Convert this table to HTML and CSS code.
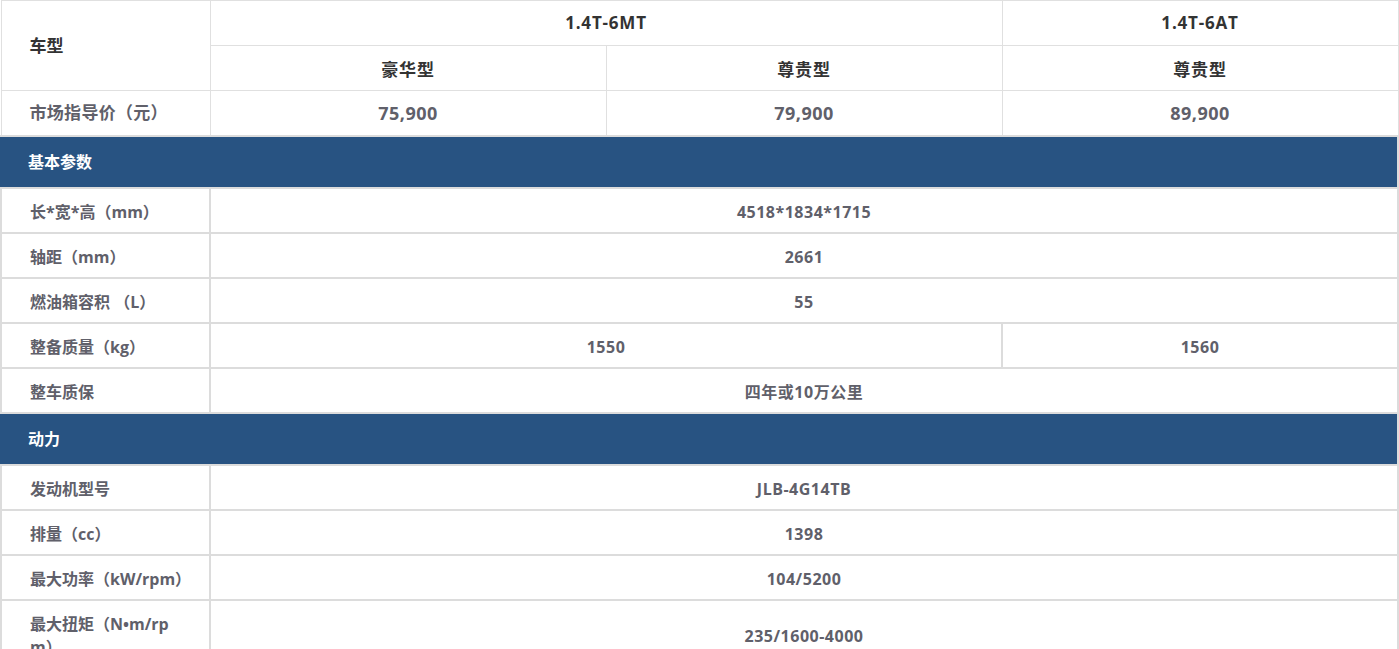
FILE: index.html
```html
<!DOCTYPE html>
<html lang="zh-CN">
<head>
<meta charset="utf-8">
<title>车型参数</title>
<link rel="stylesheet" href="styles.css">
</head>
<body>
<table class="spec">
  <colgroup>
    <col class="c-label">
    <col class="c-val">
    <col class="c-val">
    <col class="c-val">
  </colgroup>
  <thead>
    <tr class="h1">
      <th class="label" rowspan="2">车型</th>
      <th colspan="2">1.4T-6MT</th>
      <th>1.4T-6AT</th>
    </tr>
    <tr class="h2">
      <th>豪华型</th>
      <th>尊贵型</th>
      <th>尊贵型</th>
    </tr>
    <tr class="price">
      <td class="label">市场指导价（元）</td>
      <td>75,900</td>
      <td>79,900</td>
      <td>89,900</td>
    </tr>
  </thead>
  <tbody>
    <tr class="section"><td colspan="4">基本参数</td></tr>
    <tr><td class="label">长*宽*高（mm）</td><td colspan="3">4518*1834*1715</td></tr>
    <tr><td class="label">轴距（mm）</td><td colspan="3">2661</td></tr>
    <tr><td class="label">燃油箱容积 （L）</td><td colspan="3">55</td></tr>
    <tr><td class="label">整备质量（kg）</td><td colspan="2">1550</td><td>1560</td></tr>
    <tr><td class="label">整车质保</td><td colspan="3">四年或10万公里</td></tr>
    <tr class="section"><td colspan="4">动力</td></tr>
    <tr><td class="label">发动机型号</td><td colspan="3">JLB-4G14TB</td></tr>
    <tr><td class="label">排量（cc）</td><td colspan="3">1398</td></tr>
    <tr><td class="label">最大功率（kW/rpm）</td><td colspan="3">104/5200</td></tr>
    <tr><td class="label">最大扭矩（N•m/rpm）</td><td colspan="3">235/1600-4000</td></tr>
  </tbody>
</table>
</body>
</html>
```

FILE: styles.css
```css
html, body {
  margin: 0;
  padding: 0;
  background: #fff;
}

body {
  font-family: "Open Sans", "Noto Sans CJK SC", sans-serif;
  font-weight: 700;
}

.spec {
  width: 1399px;
  border-collapse: collapse;
  table-layout: fixed;
}

.c-label { width: 209px; }
.c-val { width: 396px; }

.spec th,
.spec td {
  border: 1px solid #e0e0e0;
  text-align: center;
  vertical-align: middle;
  padding: 0 30px;
  font-size: 16px;
  letter-spacing: 0.5px;
  color: #60606a;
  line-height: 22px;
}

.spec th {
  color: #333;
  font-size: 17px;
  letter-spacing: 0.8px;
  height: 44px;
}

.spec tr.h2 th {
  padding-top: 3px;
  height: 41px;
}

.spec .label {
  text-align: left;
  word-break: break-all;
  letter-spacing: 0;
  padding-left: 28px;
  padding-right: 20px;
}

.spec tr.price td {
  height: 44px;
  font-size: 18px;
  border-bottom: 2px solid #dcdcdc;
}

.spec tr.price td.label {
  font-size: 17px;
  letter-spacing: 0.3px;
}

.spec tbody td {
  border-width: 2px;
  border-color: #dcdcdc;
  padding-top: 12px;
  padding-bottom: 8px;
  line-height: 23px;
}

.spec tr.section td {
  background: #285382;
  color: #fff;
  text-align: left;
  padding: 0 0 0 26px;
  height: 50px;
  letter-spacing: 0;
  border-color: #dcdcdc;
  border-left-color: #285382;
}
```
